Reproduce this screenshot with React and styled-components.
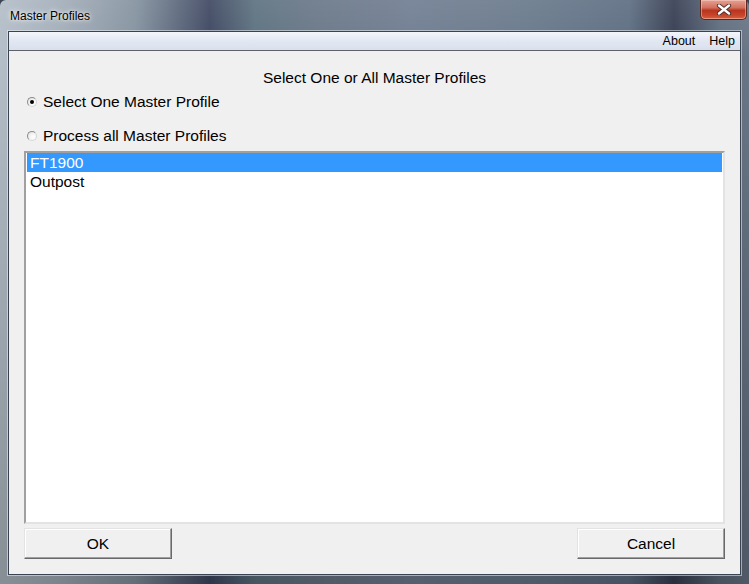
import React, { useState } from "react";
import styled, { createGlobalStyle } from "styled-components";

const GlobalStyle = createGlobalStyle`
  html, body {
    margin: 0;
    padding: 0;
    background: #3b4556;
  }
  * {
    box-sizing: border-box;
  }
`;

const profiles = ["FT1900", "Outpost"];

const App = () => {
  const [mode, setMode] = useState("one");
  const [selected, setSelected] = useState(0);

  return (
    <>
      <GlobalStyle />
      <Window>
        <TitleBar>
          <Title>Master Profiles</Title>
          <CloseButton aria-label="Close">
            <svg width="16" height="11" viewBox="0 0 16 11">
              <path
                d="M3 1.5 L13 9.5 M13 1.5 L3 9.5"
                stroke="#4a2a26"
                strokeWidth="4.2"
                strokeLinecap="round"
              />
              <path
                d="M3 1.5 L13 9.5 M13 1.5 L3 9.5"
                stroke="#ffffff"
                strokeWidth="2.4"
                strokeLinecap="round"
              />
            </svg>
          </CloseButton>
        </TitleBar>
        <Client>
          <MenuBar>
            <MenuItem>About</MenuItem>
            <MenuItem>Help</MenuItem>
          </MenuBar>
          <Body>
            <Heading>Select One or All Master Profiles</Heading>
            <RadioRow $gap={4} onClick={() => setMode("one")}>
              <Radio $checked={mode === "one"} />
              Select One Master Profile
            </RadioRow>
            <RadioRow $gap={14} onClick={() => setMode("all")}>
              <Radio $checked={mode === "all"} />
              Process all Master Profiles
            </RadioRow>
            <ListBox>
              {profiles.map((name, i) => (
                <ListItem
                  key={name}
                  $selected={i === selected}
                  onClick={() => setSelected(i)}
                >
                  {name}
                </ListItem>
              ))}
            </ListBox>
            <Buttons>
              <Button>OK</Button>
              <Button>Cancel</Button>
            </Buttons>
          </Body>
        </Client>
      </Window>
    </>
  );
};

const Window = styled.div`
  width: 749px;
  height: 584px;
  display: flex;
  flex-direction: column;
  padding: 0 8px 9px 8px;
  border-radius: 6px 6px 0 0;
  background:
    linear-gradient(
      180deg,
      rgba(255, 255, 255, 0.08) 0%,
      rgba(0, 0, 0, 0) 10%,
      rgba(0, 0, 0, 0.25) 100%
    ),
    linear-gradient(
      90deg,
      #b4bec8 0%,
      #a4afba 8%,
      #8593a0 18%,
      #3f4862 28%,
      #5d7280 34%,
      #6a7888 42%,
      #717e92 55%,
      #6a7a8c 70%,
      #5e6e82 84%,
      #373e52 90%,
      #5f6d7e 96%,
      #6a7686 100%
    );
  font-family: "Liberation Sans", Arial, sans-serif;
  color: #000;
`;

const TitleBar = styled.div`
  height: 31px;
  flex: none;
  display: flex;
  align-items: flex-start;
  justify-content: space-between;
`;

const Title = styled.div`
  padding: 9px 0 0 2px;
  font-size: 12px;
  color: #000;
  text-shadow: 0 0 6px rgba(255, 255, 255, 0.9), 0 0 3px rgba(255, 255, 255, 0.8);
`;

const CloseButton = styled.div`
  width: 47px;
  height: 20px;
  margin-right: -6px;
  border: 1px solid #5a2a22;
  border-top: none;
  border-radius: 0 0 5px 5px;
  background: linear-gradient(
    180deg,
    #e6a294 0%,
    #d2705e 40%,
    #b8361f 55%,
    #c8452a 80%,
    #d9603f 100%
  );
  box-shadow: inset 0 0 0 1px rgba(255, 220, 210, 0.45);
  display: flex;
  align-items: center;
  justify-content: center;
`;

const Client = styled.div`
  flex: 1;
  display: flex;
  flex-direction: column;
  background: #f0f0f0;
  border: 1px solid #3a4450;
  box-shadow: 0 0 0 1px rgba(235, 240, 245, 0.55);
  min-height: 0;
`;

const MenuBar = styled.div`
  height: 19px;
  flex: none;
  display: flex;
  justify-content: flex-end;
  align-items: center;
  gap: 14px;
  padding-right: 5px;
  background: linear-gradient(180deg, #f4f6fb 0%, #e4e9f3 40%, #d9e0ee 100%);
  border-bottom: 1px solid #5f6164;
`;

const MenuItem = styled.span`
  font-size: 12.5px;
  color: #000;
`;

const Body = styled.div`
  flex: 1;
  display: flex;
  flex-direction: column;
  padding: 17px 15px 15px 15px;
  min-height: 0;
  font-size: 15.5px;
`;

const Heading = styled.div`
  line-height: 20px;
  text-align: center;
`;

const RadioRow = styled.label`
  display: flex;
  align-items: center;
  gap: 6px;
  height: 20px;
  margin-top: ${(p) => p.$gap}px;
  padding-left: 3px;
  cursor: default;
`;

const Radio = styled.span`
  width: 10px;
  height: 10px;
  border-radius: 50%;
  flex: none;
  border: 1px solid #8c8c8c;
  border-bottom-color: #d6d6d6;
  border-right-color: #d6d6d6;
  background: radial-gradient(circle at 65% 65%, #ffffff 0%, #f2f2f2 50%, #d8d8d8 100%);
  position: relative;
  &::after {
    content: "";
    display: ${(p) => (p.$checked ? "block" : "none")};
    position: absolute;
    left: 2px;
    top: 2px;
    width: 4px;
    height: 4px;
    border-radius: 50%;
    background: #000;
  }
`;

const ListBox = styled.div`
  flex: 1;
  margin-top: 5px;
  background: #fff;
  border-top: 2px solid #a0a0a0;
  border-left: 2px solid #a0a0a0;
  border-right: 2px solid #e3e3e3;
  border-bottom: 2px solid #e3e3e3;
  box-shadow: inset 1px 1px 0 #ffffff;
  padding: 0 1px;
  min-height: 0;
`;

const ListItem = styled.div`
  height: 19px;
  line-height: 19px;
  padding-left: 3px;
  color: ${(p) => (p.$selected ? "#fff" : "#000")};
  background: ${(p) => (p.$selected ? "#3399ff" : "transparent")};
`;

const Buttons = styled.div`
  display: flex;
  justify-content: space-between;
  margin-top: 4px;
`;

const Button = styled.button`
  width: 148px;
  height: 31px;
  font-family: inherit;
  font-size: 15.5px;
  color: #000;
  background: #f0f0f0;
  border: 1px solid;
  border-color: #e3e3e3 #696969 #696969 #e3e3e3;
  box-shadow: inset -1px -1px 0 #a0a0a0, inset 1px 1px 0 #ffffff;
  padding: 0;
`;

export default App;
